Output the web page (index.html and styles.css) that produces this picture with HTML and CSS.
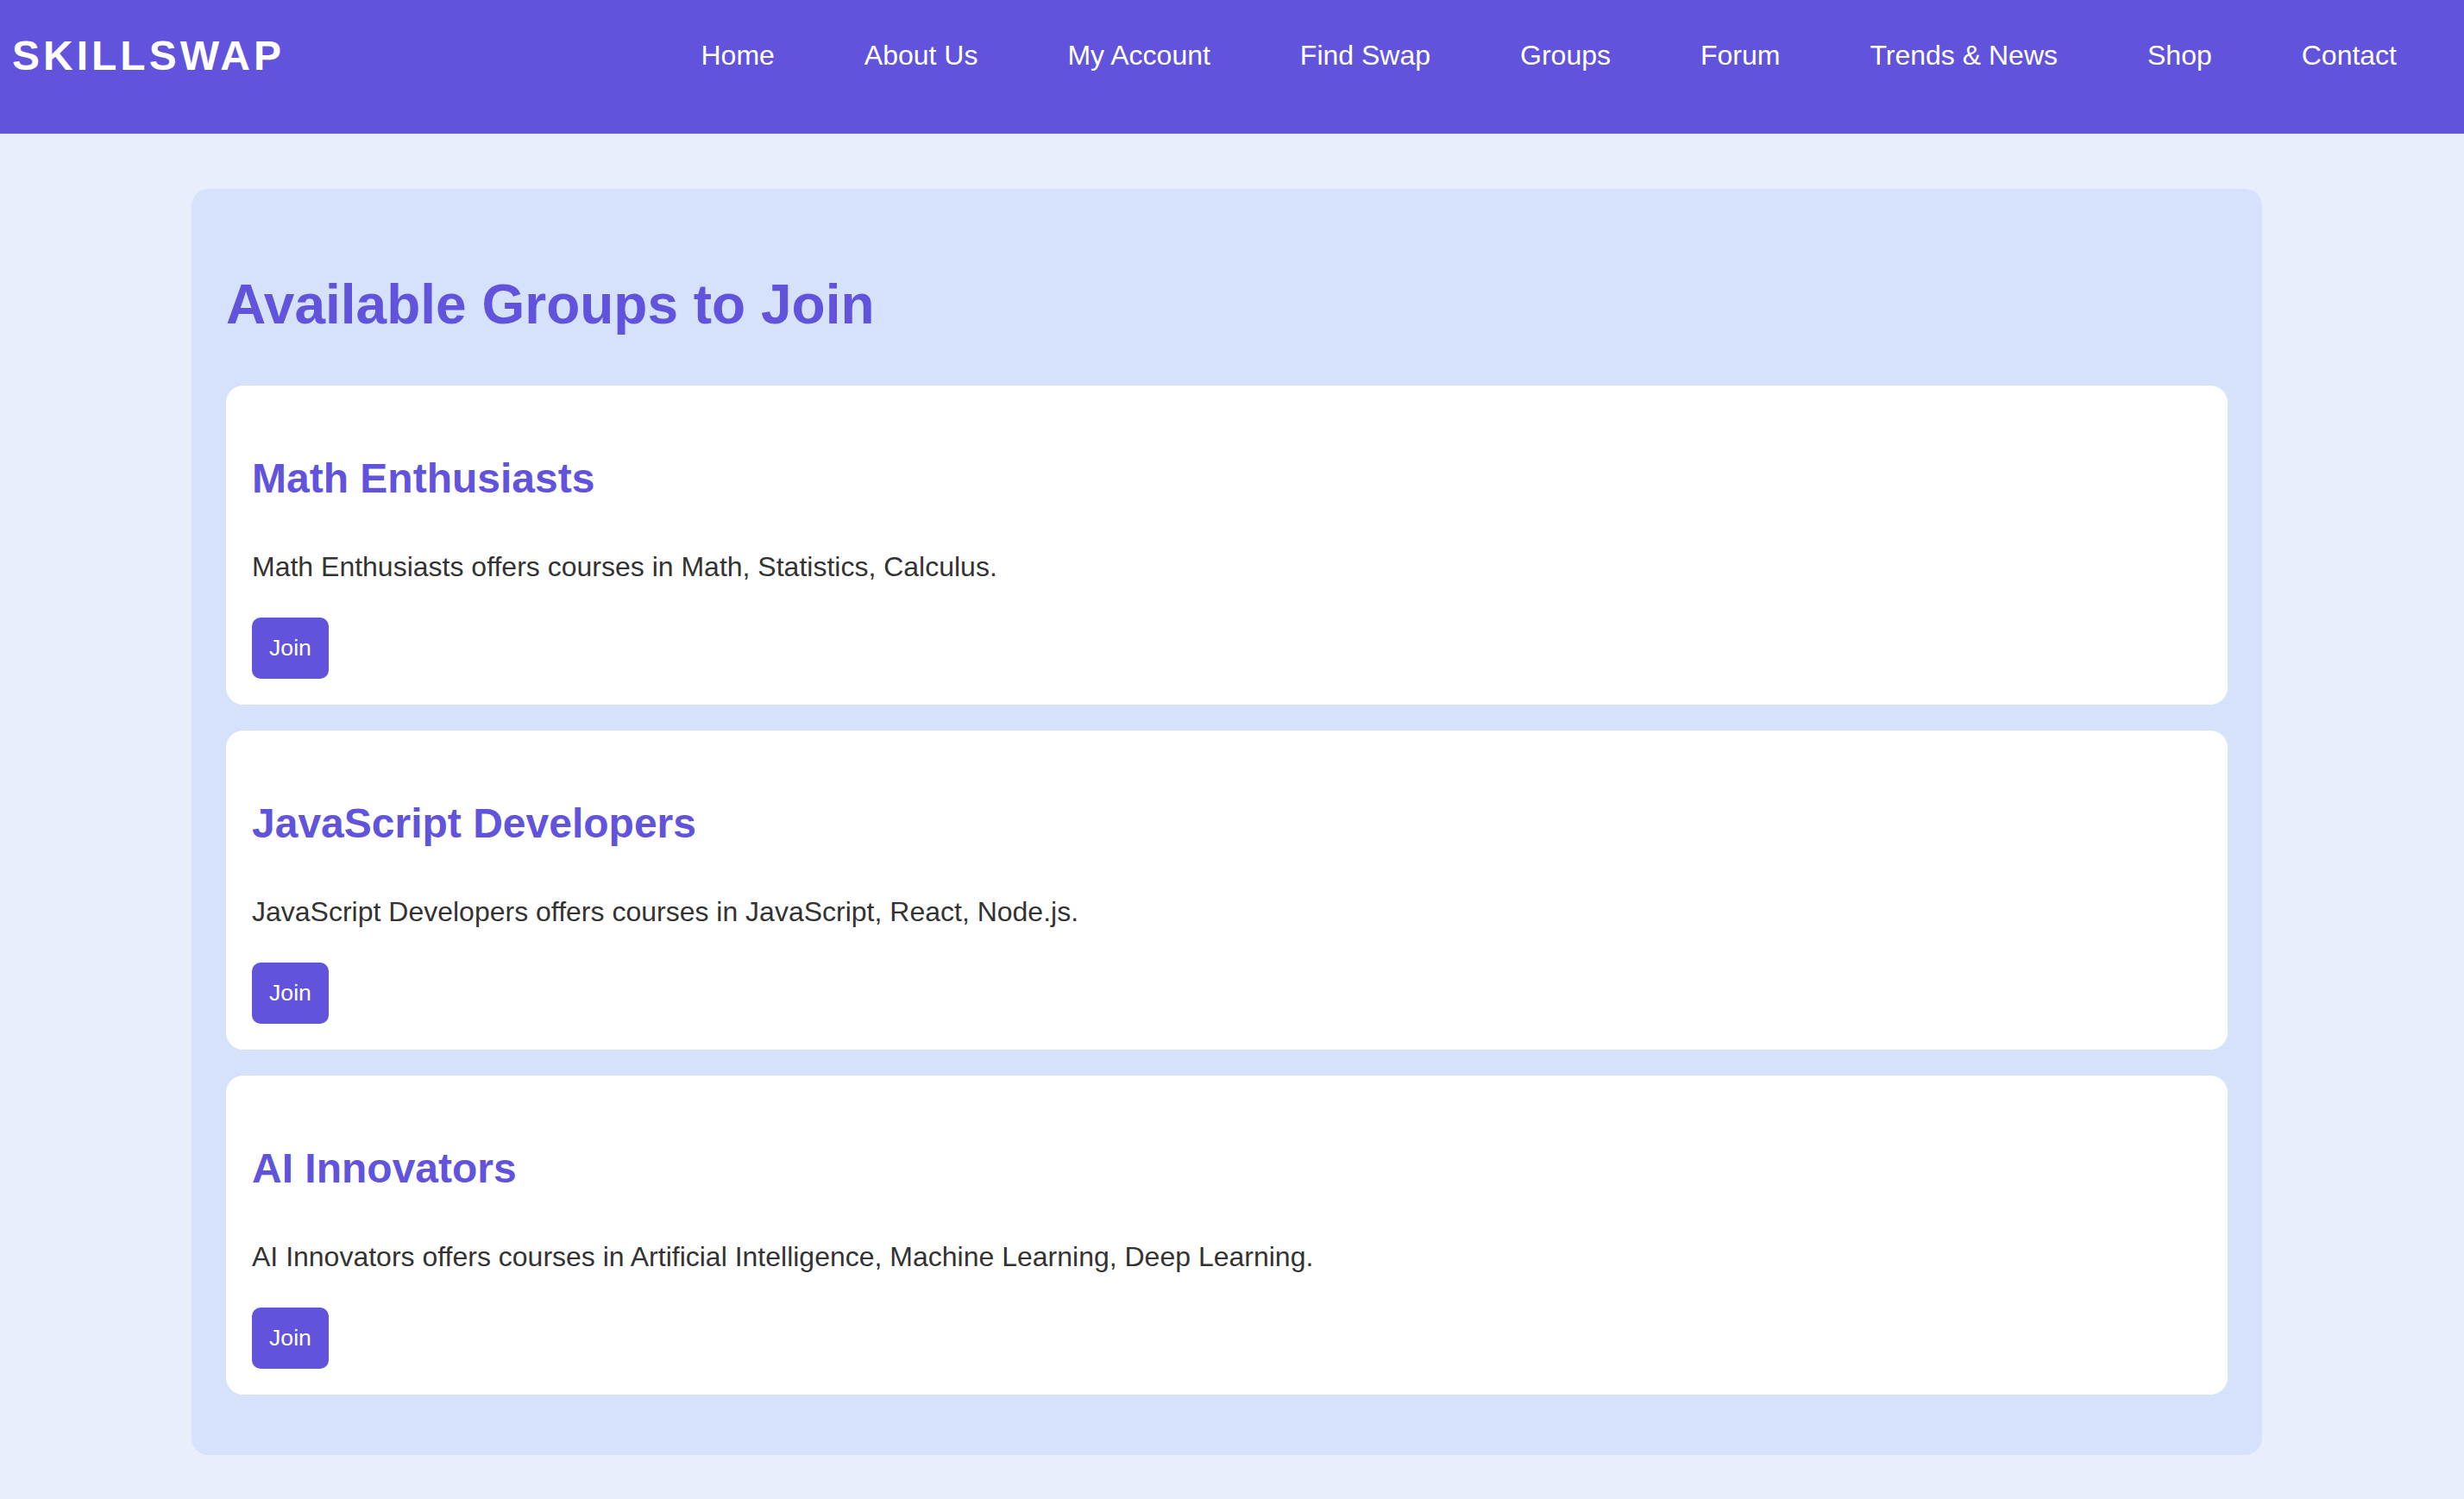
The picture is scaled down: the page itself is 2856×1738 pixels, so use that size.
FILE: index.html
```html
<!DOCTYPE html>
<html lang="en">
<head>
<meta charset="utf-8">
<title>SkillSwap - Groups</title>
<link rel="stylesheet" href="styles.css">
</head>
<body>
<header class="site-header">
  <div class="logo">SKILLSWAP</div>
  <nav class="main-nav">
    <a href="#">Home</a>
    <a href="#">About Us</a>
    <a href="#">My Account</a>
    <a href="#">Find Swap</a>
    <a href="#">Groups</a>
    <a href="#">Forum</a>
    <a href="#">Trends &amp; News</a>
    <a href="#">Shop</a>
    <a href="#">Contact</a>
  </nav>
</header>
<main class="page">
  <section class="groups">
    <h2 class="groups-title">Available Groups to Join</h2>
    <div class="group-card">
      <h3 class="group-name">Math Enthusiasts</h3>
      <p class="group-desc">Math Enthusiasts offers courses in Math, Statistics, Calculus.</p>
      <button class="join-btn">Join</button>
    </div>
    <div class="group-card">
      <h3 class="group-name">JavaScript Developers</h3>
      <p class="group-desc">JavaScript Developers offers courses in JavaScript, React, Node.js.</p>
      <button class="join-btn">Join</button>
    </div>
    <div class="group-card">
      <h3 class="group-name">AI Innovators</h3>
      <p class="group-desc">AI Innovators offers courses in Artificial Intelligence, Machine Learning, Deep Learning.</p>
      <button class="join-btn">Join</button>
    </div>
  </section>
</main>
</body>
</html>
```
FILE: styles.css
```css
* { box-sizing: border-box; }

html, body {
  margin: 0;
  padding: 0;
}

body {
  background: #e8eefc;
  font-family: "Liberation Sans", Arial, sans-serif;
  color: #333333;
}

.site-header {
  display: flex;
  justify-content: space-between;
  align-items: flex-start;
  height: 155px;
  padding: 0 78px 0 14px;
  background: #6153dc;
  color: #ffffff;
}

.logo {
  padding-top: 37px;
  font-size: 48px;
  font-weight: bold;
  letter-spacing: 4px;
  line-height: normal;
}

.main-nav {
  display: flex;
  gap: 104px;
  padding-top: 46px;
}

.main-nav a {
  color: #ffffff;
  text-decoration: none;
  font-size: 32px;
  line-height: normal;
}

.page {
  padding: 64px 12px 0 0;
}

.groups {
  max-width: 2400px;
  margin: 0 auto;
  padding: 40px;
  background: #d6e2fb;
  border-radius: 20px;
}

.groups-title {
  margin: 57px 0;
  font-size: 64px;
  font-weight: bold;
  line-height: normal;
  color: #6153dc;
}

.group-card {
  margin-bottom: 30px;
  padding: 30px;
  background: #ffffff;
  border-radius: 20px;
}

.group-name {
  margin: 50px 0 57px;
  font-size: 48px;
  font-weight: bold;
  line-height: normal;
  color: #6153dc;
}

.group-desc {
  margin: 0 0 40px;
  font-size: 32px;
  line-height: normal;
  color: #333333;
}

.join-btn {
  display: block;
  padding: 20px;
  border: none;
  border-radius: 10px;
  background: #6153dc;
  color: #ffffff;
  font-family: "Liberation Sans", Arial, sans-serif;
  font-size: 26.67px;
  line-height: normal;
  cursor: pointer;
}
```
